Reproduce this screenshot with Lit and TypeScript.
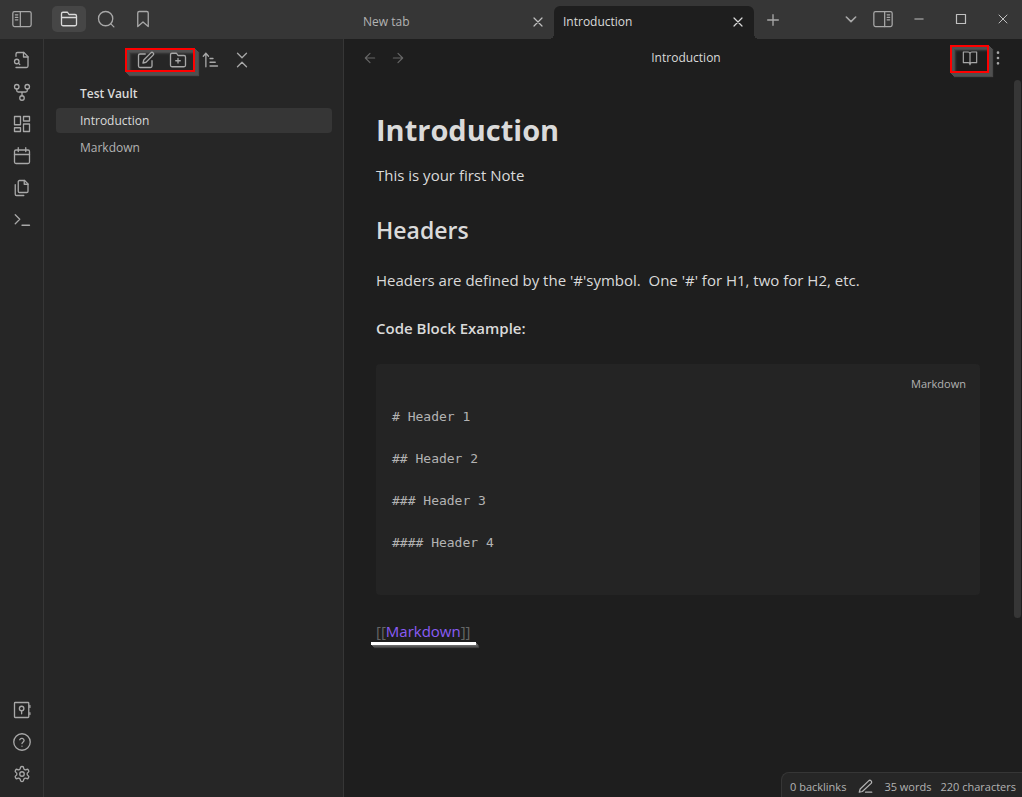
import { LitElement, html, css, svg, TemplateResult } from "lit";
import { customElement, property } from "lit/decorators.js";

const ICONS: Record<string, TemplateResult> = {
  panelLeft: svg`<rect x="1" y="3" width="22" height="18" rx="2"/><path d="M10 3v18M4 7h3M4 10h3M4 13h3"/>`,
  panelRight: svg`<rect x="1" y="3" width="22" height="18" rx="2"/><path d="M14 3v18M17 7h3M17 10h3M17 13h3"/>`,
  folder: svg`<path d="M4 21h16a2 2 0 0 0 2-2V8a2 2 0 0 0-2-2h-8l-2-3H4a2 2 0 0 0-2 2v14a2 2 0 0 0 2 2zM2 10h20"/>`,
  search: svg`<circle cx="11.5" cy="11.5" r="9.5"/><path d="M18.5 18.5l4 4"/>`,
  bookmark: svg`<path d="m19 22-7-6-7 6V4a2 2 0 0 1 2-2h10a2 2 0 0 1 2 2z"/>`,
  fileSearch: svg`<path d="M4 22h14a2 2 0 0 0 2-2V7.500L14.500 2H6a2 2 0 0 0-2 2v3"/><path d="M14 2v6h6"/><circle cx="5" cy="14" r="3"/><path d="m9 18-1.800-1.800"/>`,
  fork: svg`<circle cx="12" cy="20" r="3"/><circle cx="5" cy="5" r="3"/><circle cx="19" cy="5" r="3"/><path d="M5 8v2a2 2 0 0 0 2 2h10a2 2 0 0 0 2-2V8M12 12v5"/>`,
  dashboard: svg`<rect x="2" y="2" width="8" height="11"/><rect x="14" y="2" width="8" height="6"/><rect x="14" y="12" width="8" height="10"/><rect x="2" y="17" width="8" height="5"/>`,
  calendar: svg`<rect x="2" y="4" width="20" height="18" rx="2"/><path d="M7 1v5M17 1v5M2 10h20"/>`,
  files: svg`<path d="M15.500 2H8.600A1.600 1.600 0 0 0 7 3.600v12.800A1.600 1.600 0 0 0 8.600 18h9.800a1.600 1.600 0 0 0 1.600-1.600V6.500z"/><path d="M15 2v5h5"/><path d="M3 7.600v12.800A1.600 1.600 0 0 0 4.600 22h9.800"/>`,
  terminal: svg`<path d="m3 17 6-6-6-6M12 19h10"/>`,
  vault: svg`<rect x="2" y="2" width="19" height="20" rx="1"/><circle cx="11.500" cy="10" r="3"/><path d="M11.500 13v4M22.500 6v2.500M22.500 15.500v2.500"/>`,
  help: svg`<circle cx="12" cy="12" r="11"/><path d="M9 9a3 3 0 0 1 5.800 1c0 2-2.800 2.500-2.800 4M12 17.500v.1"/>`,
  gear: svg`<path d="M12.220 2h-.44a2 2 0 0 0-2 2v.18a2 2 0 0 1-1 1.730l-.43.25a2 2 0 0 1-2 0l-.15-.08a2 2 0 0 0-2.730.73l-.22.38a2 2 0 0 0 .73 2.730l.15.1a2 2 0 0 1 1 1.720v.51a2 2 0 0 1-1 1.740l-.15.09a2 2 0 0 0-.73 2.730l.22.38a2 2 0 0 0 2.730.73l.15-.08a2 2 0 0 1 2 0l.43.25a2 2 0 0 1 1 1.730V20a2 2 0 0 0 2 2h.44a2 2 0 0 0 2-2v-.18a2 2 0 0 1 1-1.730l.43-.25a2 2 0 0 1 2 0l.15.08a2 2 0 0 0 2.730-.73l.22-.39a2 2 0 0 0-.73-2.730l-.15-.08a2 2 0 0 1-1-1.740v-.5a2 2 0 0 1 1-1.740l.15-.09a2 2 0 0 0 .73-2.730l-.22-.38a2 2 0 0 0-2.730-.73l-.15.08a2 2 0 0 1-2 0l-.43-.25a2 2 0 0 1-1-1.730V4a2 2 0 0 0-2-2z"/><circle cx="12" cy="12" r="3"/>`,
  newNote: svg`<path d="M11 4H4a2 2 0 0 0-2 2v14a2 2 0 0 0 2 2h14a2 2 0 0 0 2-2v-7"/><path d="M18.500 2.500a2.120 2.120 0 0 1 3 3L12 15l-4 1 1-4z"/>`,
  newFolder: svg`<path d="M4 21h16a2 2 0 0 0 2-2V8a2 2 0 0 0-2-2h-8l-2-3H4a2 2 0 0 0-2 2v14a2 2 0 0 0 2 2zM12 10v6M9 13h6"/>`,
  sort: svg`<path d="m3 7 3.500-4 3.500 4M6.500 3v18M12 10h4M12 15h7M12 20h10"/>`,
  collapse: svg`<path d="m6 21 6-6 6 6M6 3l6 6 6-6"/>`,
  close: svg`<path d="M4 4l16 16M20 4L4 20"/>`,
  plus: svg`<path d="M12 4v16M4 12h16"/>`,
  chevron: svg`<path d="m5 9 7 7 7-7"/>`,
  minimize: svg`<path d="M2 12h20"/>`,
  maximize: svg`<rect x="3" y="3" width="18" height="18"/>`,
  back: svg`<path d="m12 19-7-7 7-7M19 12H5"/>`,
  forward: svg`<path d="m12 5 7 7-7 7M5 12h14"/>`,
  book: svg`<path d="M2 3h7a3 3 0 0 1 3 3v16a3 3 0 0 0-3-3H2zM22 3h-7a3 3 0 0 0-3 3v16a3 3 0 0 1 3-3h7z"/>`,
  more: svg`<circle cx="12" cy="4" r="1"/><circle cx="12" cy="12" r="1"/><circle cx="12" cy="20" r="1"/>`,
  pencil: svg`<path d="M12 21h10M17 3a2.500 2.500 0 0 1 4 4L7 20l-5 1 1.500-5z"/>`,
};

@customElement("icon-button")
class IconButton extends LitElement {
  @property() icon = "";
  @property() label = "";
  @property({ type: Number }) size = 18;
  @property({ type: Number }) weight = 2;

  static styles = css`
    :host { display: flex; }
    .btn {
      display: flex; align-items: center; justify-content: center;
      width: var(--btn-w, 26px); height: var(--btn-h, 26px);
      padding: 0; border: 0; border-radius: 5px;
      background: var(--btn-bg, transparent); color: var(--btn-color, #a8a8a8);
    }
    .glyph { fill: none; stroke: currentColor; stroke-linecap: round; stroke-linejoin: round; flex: none; }
  `;

  render() {
    return html`<button class="btn" aria-label=${this.label}>
      <svg class="glyph" width=${this.size} height=${this.size} viewBox="0 0 24 24" stroke-width=${this.weight}>${ICONS[this.icon]}</svg>
    </button>`;
  }
}

const button = (icon: string, label: string, size = 18, weight = 1.75, cls = "") =>
  html`<icon-button class=${cls} icon=${icon} label=${label} .size=${size} .weight=${weight}></icon-button>`;

@customElement("app-root")
class AppRoot extends LitElement {
  static styles = css`
    :host {
      display: flex; flex-direction: column; height: 100vh; position: relative; overflow: hidden;
      background: #1e1e1e; color: #dadada;
      font: 12px/20px "Open Sans", "Noto Sans", sans-serif;
    }
    * { box-sizing: border-box; }
    .titlebar { display: flex; flex: none; height: 39px; background: #363636; color: #b3b3b3; }
    .left-tools { display: flex; align-items: center; width: 344px; padding: 0 0 2px 5px; gap: 3px; --btn-w: 34px; }
    .toggle { margin-right: 10px; }
    .selected { --btn-bg: #464646; --btn-color: #dadada; }
    .tabs { display: flex; flex: 1; padding: 6px 0 0 10px; }
    .tab {
      display: flex; align-items: center; justify-content: space-between; position: relative;
      width: 200px; height: 33px; padding: 0 3px 2px 9px; --btn-color: #c0c0c0;
    }
    .tab.active { background: #1e1e1e; color: #dadada; border-radius: 6px 6px 0 0; --btn-color: #dadada; }
    .tab.active::before, .tab.active::after {
      content: ""; position: absolute; bottom: 0; width: 5px; height: 5px;
    }
    .tab.active::before { right: 100%; background: radial-gradient(circle at 0 0, transparent 5px, #1e1e1e 5px); }
    .tab.active::after { left: 100%; background: radial-gradient(circle at 100% 0, transparent 5px, #1e1e1e 5px); }
    .tab-name { color: inherit; text-decoration: none; }
    .add { display: flex; align-items: center; padding: 0 0 5px 6px; }
    .right-tools { display: flex; align-items: center; gap: 6px; padding-bottom: 2px; }
    .window-tools { display: flex; align-items: center; gap: 32px; padding: 0 14px 2px 18px; --btn-w: 10px; --btn-color: #c0c0c0; }

    .body { display: flex; flex: 1; min-height: 0; }
    .ribbon {
      display: flex; flex-direction: column; justify-content: space-between; align-items: center;
      width: 44px; padding: 8px 0 10px; background: #262626; border-right: 1px solid #363636;
    }
    .group { display: flex; flex-direction: column; gap: 6px; }
    .sidebar { width: 300px; padding: 8px 11px 0 12px; background: #262626; border-right: 1px solid #363636; color: #b3b3b3; }
    .side-tools { display: flex; justify-content: center; gap: 6px; margin-bottom: 8px; }
    .marked { position: relative; display: flex; gap: 6px; }
    .marked::after {
      content: ""; position: absolute; inset: 1px -4px 1px -8px; border: 2px solid #f00; pointer-events: none;
      box-shadow: 1px 1px #505050, 2px 2px #505050, 3px 3px #505050, 4px 4px 1px #484848,
        inset 2px 2px #505050, inset 3px 3px #484848, inset 4px 4px 2px #3c3c3c;
    }
    .marked > icon-button { position: relative; z-index: 1; }
    .vault, .file {
      display: block; height: 25px; margin-bottom: 2px; padding: 3px 24px 2px; border-radius: 4px;
      color: inherit; text-decoration: none;
    }
    .vault { font-weight: 600; color: #dadada; }
    .file.active { background: #363636; color: #dadada; }

    .main { display: flex; flex: 1; flex-direction: column; min-width: 0; position: relative; }
    .view-header { display: flex; align-items: center; height: 38px; padding: 0 11px 0 13px; }
    .nav { display: flex; gap: 2px; --btn-color: #666; }
    .view-title { flex: 1; padding-left: 4px; text-align: center; }
    .actions { display: flex; gap: 2px; }
    .actions .marked::after { inset: 0 -6px -2px -7px; }
    .note { padding: 32px 42px 0 32px; font-size: 15px; line-height: 24px; }
    .h1, .h2, .h4, .para { margin: 0; }
    .h1 { font-size: 29px; line-height: 42px; font-weight: 700; margin-bottom: 12px; }
    .h2 { font-size: 23px; line-height: 32px; font-weight: 600; margin: 27px 0 22px; }
    .h4 { font-size: 15px; line-height: 24px; font-weight: 600; margin: 24px 0; }
    .para { white-space: pre-wrap; }
    .code { position: relative; min-height: 231px; padding: 42px 16px 42px; border-radius: 4px; background: #242424; color: #b3b3b3; margin-bottom: 24px; }
    .code-text { margin: 0; font: 13px/21px "DejaVu Sans Mono", monospace; }
    .lang { position: absolute; top: 10px; right: 14px; font-size: 11px; line-height: 20px; }
    .bracket { color: #666; }
    .link { color: #8a5cf5; text-decoration: none; }
    .linked { position: relative; display: inline-block; }
    .linked::after {
      content: ""; position: absolute; left: -5px; right: -5px; bottom: -2px; height: 3px; background: #fff;
      box-shadow: 1px 1px #666, 2px 2px #555, 3px 3px 1px #444;
    }
    .scroll { position: absolute; top: 41px; right: 1px; width: 7px; height: 71%; border-radius: 4px; background: #363636; }
    .status {
      position: absolute; right: 0; bottom: 0; display: flex; align-items: center; height: 25px;
      padding: 3px 6px 0 8px; border: solid #363636; border-width: 1px 0 0 1px; border-radius: 8px 0 0 0;
      background: #262626; color: #b3b3b3; font-size: 11px; gap: 9px; --btn-h: 20px; --btn-w: 20px; --btn-color: #b3b3b3;
    }
  `;

  render() {
    return html`
      <header class="titlebar">
        <div class="left-tools">
          ${button("panelLeft", "Toggle left sidebar", 20, 1.5, "toggle")}
          ${button("folder", "Files", 18, 1.75, "selected")}
          ${button("search", "Search")} ${button("bookmark", "Bookmarks")}
        </div>
        <nav class="tabs">
          <div class="tab"><a class="tab-name" href="#new">New tab</a>${button("close", "Close New tab", 12, 2.4)}</div>
          <div class="tab active"><a class="tab-name" href="#intro">Introduction</a>${button("close", "Close Introduction", 12, 2.4)}</div>
          <div class="add">${button("plus", "Add tab", 16, 2)}</div>
        </nav>
        <div class="right-tools">
          ${button("chevron", "Tab list", 16, 2.4)} ${button("panelRight", "Toggle right sidebar", 20, 1.5)}
        </div>
        <div class="window-tools">
          ${button("minimize", "Minimize", 10, 2.4)} ${button("maximize", "Maximize", 12, 2.4)} ${button("close", "Close window", 12, 2)}
        </div>
      </header>
      <div class="body">
        <nav class="ribbon">
          <div class="group">
            ${button("fileSearch", "Quick switcher")} ${button("fork", "Graph view")} ${button("dashboard", "Canvas")}
            ${button("calendar", "Daily note")} ${button("files", "Insert template")} ${button("terminal", "Command palette")}
          </div>
          <div class="group">
            ${button("vault", "Open another vault")} ${button("help", "Help")} ${button("gear", "Settings")}
          </div>
        </nav>
        <aside class="sidebar">
          <div class="side-tools">
            <div class="marked">${button("newNote", "New note")} ${button("newFolder", "New folder")}</div>
            ${button("sort", "Sort order")} ${button("collapse", "Collapse all", 18, 1.75)}
          </div>
          <div class="vault">Test Vault</div>
          <a class="file active" href="#intro">Introduction</a>
          <a class="file" href="#markdown">Markdown</a>
        </aside>
        <main class="main">
          <div class="view-header">
            <div class="nav">${button("back", "Back", 16)} ${button("forward", "Forward", 16)}</div>
            <div class="view-title">Introduction</div>
            <div class="actions">
              <div class="marked">${button("book", "Reading view", 16, 1.75)}</div>
              ${button("more", "More options", 16, 2)}
            </div>
          </div>
          <article class="note">
            <h1 class="h1">Introduction</h1>
            <p class="para">This is your first Note</p>
            <h2 class="h2">Headers</h2>
            <p class="para">Headers are defined by the '#'symbol.  One '#' for H1, two for H2, etc.</p>
            <h4 class="h4">Code Block Example:</h4>
            <div class="code">
              <span class="lang">Markdown</span>
              <pre class="code-text"># Header 1

## Header 2

### Header 3

#### Header 4</pre>
            </div>
            <div class="linked"><span class="bracket">[[</span><a class="link" href="#markdown">Markdown</a><span class="bracket">]]</span></div>
          </article>
          <div class="scroll"></div>
        </main>
      </div>
      <footer class="status">
        <span>0 backlinks</span>${button("pencil", "Editing mode", 15, 2)}<span>35 words</span><span>220 characters</span>
      </footer>
    `;
  }
}
